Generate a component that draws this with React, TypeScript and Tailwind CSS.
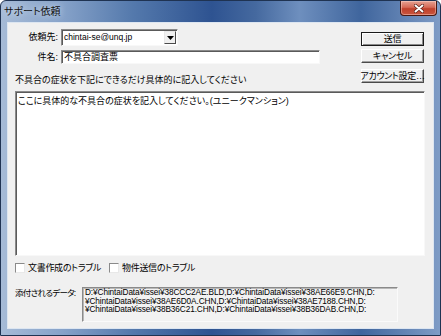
const jp = "font-['Liberation_Sans','Noto_Sans_CJK_JP',sans-serif] [font-feature-settings:'palt']"

const sunken =
  'border border-t-[#8a8a8a] border-l-[#8a8a8a] border-r-[#f8f8f8] border-b-[#f8f8f8] shadow-[inset_1px_1px_0_#5a5a5a]'

function Button({ label, isDefault }: { label: string; isDefault?: boolean }) {
  return (
    <div
      className={
        'flex h-[14px] items-center justify-center border bg-[#f0f0f0] text-[9px] leading-none whitespace-nowrap tracking-[-0.3px] text-black ' +
        (isDefault
          ? 'border-[#1a1a1a] shadow-[inset_1px_1px_0_#fff,inset_-1px_-1px_0_#8a8a8a]'
          : 'border-t-white border-l-white border-r-[#4a4a4a] border-b-[#4a4a4a] shadow-[inset_-1px_-1px_0_#a0a0a0]')
      }
    >
      {label}
    </div>
  )
}

function Checkbox({ label, className }: { label: string; className?: string }) {
  return (
    <div className={'flex items-center ' + (className ?? '')}>
      <span className="h-[10px] w-[10px] border border-t-[#8a8a8a] border-l-[#8a8a8a] border-r-[#e8e8e8] border-b-[#e8e8e8] bg-white" />
      <span className="ml-[3px] text-[9px] leading-none tracking-[-0.3px] whitespace-nowrap">{label}</span>
    </div>
  )
}

export default function App() {
  return (
    <div className={'h-[336px] w-[441px] bg-white text-black ' + jp}>
      <div className="flex h-full flex-col rounded-t-[6px] border border-[#1f3352] bg-[linear-gradient(90deg,#a6bbd7_0%,#86a2c9_14%,#5479ac_30%,#2e5391_48%,#45699f_58%,#6e8fbe_68%,#3f659d_82%,#7f9cc6_100%)]">
        {/* Title bar */}
        <div className="flex h-[21px] items-start justify-between">
          <span className="mt-[5px] ml-[3px] text-[10px] leading-[11px] text-[#111] [text-shadow:0_0_6px_#dfe9f5]">
            サポート依頼
          </span>
          <div className="mr-[3px] flex h-[15px] w-[37px] items-center justify-center rounded-b-[4px] border border-t-0 border-[#4a1810] bg-[linear-gradient(180deg,#e6a293_0%,#d66a57_45%,#c0412c_55%,#c9553d_100%)] shadow-[inset_0_0_0_1px_rgba(255,220,210,0.45)]">
            <svg width="10" height="9" viewBox="0 0 10 9">
              <path d="M1.5 1.5 L8.5 7.5 M8.5 1.5 L1.5 7.5" stroke="#5a2018" strokeWidth="3.4" strokeLinecap="round" />
              <path d="M1.5 1.5 L8.5 7.5 M8.5 1.5 L1.5 7.5" stroke="#ffffff" strokeWidth="2" strokeLinecap="round" />
            </svg>
          </div>
        </div>

        {/* Client area */}
        <div className="mx-[6px] mb-[6px] flex flex-1 flex-col border border-[#dde6f1] bg-[#f0f0f0]">
          <div className="flex items-start">
            <div className="flex flex-1 flex-col">
              <div className="mt-[6px] flex h-[17px] items-center">
                <span className="w-[50px] text-right text-[9px] leading-none">依頼先:</span>
                <div className={'ml-[3px] flex h-[17px] w-[117px] items-center bg-white ' + sunken}>
                  <span className="flex-1 pl-[2px] text-[8.5px] leading-none">chintai-se@unq.jp</span>
                  <span className="mr-px flex h-[13px] w-[12px] items-center justify-center border border-t-[#e8e8e8] border-l-[#e8e8e8] border-r-[#4a4a4a] border-b-[#4a4a4a] bg-[#f0f0f0]">
                    <svg width="7" height="4" viewBox="0 0 7 4">
                      <path d="M0 0 H7 L3.5 4 Z" fill="#000" />
                    </svg>
                  </span>
                </div>
              </div>
              <div className="mt-[4px] flex h-[14px] items-center">
                <span className="w-[50px] text-right text-[9px] leading-none">件名:</span>
                <div className={'ml-[3px] flex h-[14px] w-[259px] items-center bg-white ' + sunken}>
                  <span className="pl-[2px] text-[9px] leading-none">不具合調査票</span>
                </div>
              </div>
              <div className="mt-[10px] ml-[7px] h-[12px] text-[9px] leading-[12px]">
                不具合の症状を下記にできるだけ具体的に記入してください
              </div>
            </div>
            <div className="mt-[9px] mr-[9px] flex w-[63px] flex-col">
              <Button label="送信" isDefault />
              <div className="mt-[3px]">
                <Button label="キャンセル" />
              </div>
              <div className="mt-[6px]">
                <Button label="アカウント設定…" />
              </div>
            </div>
          </div>

          <div className={'mt-[5px] ml-[7px] mr-[8px] h-[165px] bg-white ' + sunken}>
            <div className="pt-[4px] pl-[2px] text-[9px] leading-[11px]">
              ここに具体的な不具合の症状を記入してください。(ユニークマンション)
            </div>
          </div>

          <div className="mt-[6px] ml-[7px] flex h-[12px] items-center">
            <Checkbox label="文書作成のトラブル" className="w-[94px]" />
            <Checkbox label="物件送信のトラブル" />
          </div>

          <div className="mt-[13px] ml-[7px] flex items-start">
            <span className="w-[67px] pt-px text-[8.5px] leading-[11px] tracking-[-0.7px] whitespace-nowrap">添付されるデータ:</span>
            <div className="h-[35px] w-[316px] border border-t-[#8a8a8a] border-l-[#8a8a8a] border-r-[#fafafa] border-b-[#fafafa] bg-[#f2f2f2] shadow-[inset_1px_1px_0_#b8b8b8]">
              <div className="pt-px pl-[2px] text-[8.25px] leading-[8.5px] tracking-[-0.1px] whitespace-nowrap">
                <div>D:¥ChintaiData¥issei¥38CCC2AE.BLD,D:¥ChintaiData¥issei¥38AE66E9.CHN,D:</div>
                <div>¥ChintaiData¥issei¥38AE6D0A.CHN,D:¥ChintaiData¥issei¥38AE7188.CHN,D:</div>
                <div>¥ChintaiData¥issei¥38B36C21.CHN,D:¥ChintaiData¥issei¥38B36DAB.CHN,D:</div>
              </div>
            </div>
          </div>
        </div>
      </div>
    </div>
  )
}
